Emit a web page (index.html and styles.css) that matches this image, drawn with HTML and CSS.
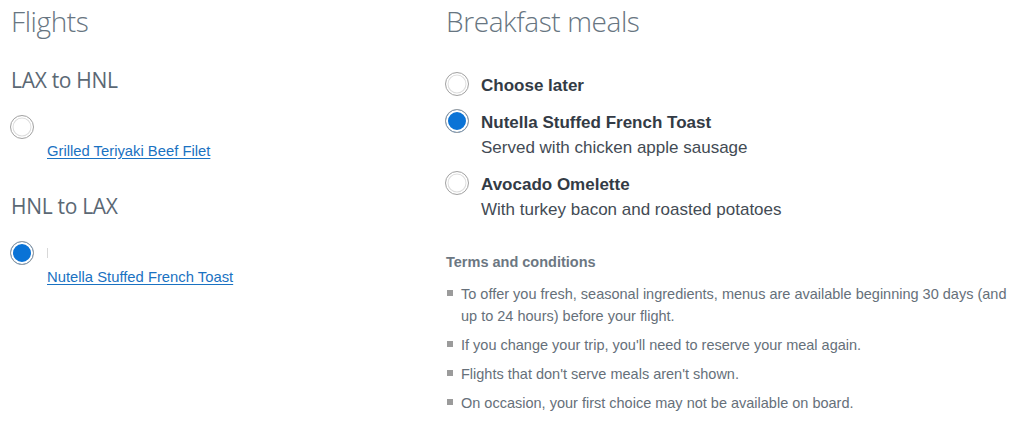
FILE: index.html
```html
<!DOCTYPE html>
<html>
<head>
<meta charset="utf-8">
<link rel="stylesheet" href="styles.css">
</head>
<body>
<div class="page">
  <section class="flights">
    <h1 class="title">Flights</h1>
    <div class="leg">
      <h2 class="leg-title">LAX to HNL</h2>
      <div class="leg-row"><span class="radio"></span></div>
      <a class="leg-link" href="#">Grilled Teriyaki Beef Filet</a>
    </div>
    <div class="leg leg-second">
      <h2 class="leg-title">HNL to LAX</h2>
      <div class="leg-row"><span class="radio checked"></span><span class="caret"></span></div>
      <a class="leg-link" href="#">Nutella Stuffed French Toast</a>
    </div>
  </section>
  <section class="meals">
    <h1 class="title title-meals">Breakfast meals</h1>
    <div class="options">
      <div class="option">
        <span class="radio"></span>
        <div class="option-text"><div class="option-name">Choose later</div></div>
      </div>
      <div class="option">
        <span class="radio checked"></span>
        <div class="option-text">
          <div class="option-name">Nutella Stuffed French Toast</div>
          <div class="option-desc">Served with chicken apple sausage</div>
        </div>
      </div>
      <div class="option">
        <span class="radio"></span>
        <div class="option-text">
          <div class="option-name">Avocado Omelette</div>
          <div class="option-desc">With turkey bacon and roasted potatoes</div>
        </div>
      </div>
    </div>
    <h3 class="terms-title">Terms and conditions</h3>
    <ul class="terms">
      <li>To offer you fresh, seasonal ingredients, menus are available beginning 30 days (and up to 24 hours) before your flight.</li>
      <li>If you change your trip, you'll need to reserve your meal again.</li>
      <li>Flights that don't serve meals aren't shown.</li>
      <li>On occasion, your first choice may not be available on board.</li>
    </ul>
  </section>
</div>
</body>
</html>
```
FILE: styles.css
```css
html, body {
  margin: 0;
  padding: 0;
  background: #ffffff;
}
body {
  font-family: "Liberation Sans", Arial, sans-serif;
  color: #333b44;
}
.page {
  display: flex;
  padding-top: 1px;
}
.flights {
  width: 435px;
  padding-left: 11px;
  flex: none;
}
.meals {
  flex: 1;
  padding-right: 10px;
}
.title {
  margin: 0;
  font-family: "Open Sans", sans-serif;
  font-weight: 300;
  font-size: 28px;
  line-height: 40px;
  color: #677581;
  letter-spacing: -0.4px;
}
.leg-title {
  margin: 24px 0 0;
  font-family: "Open Sans", sans-serif;
  font-weight: 400;
  font-size: 21px;
  line-height: 30px;
  color: #5b6874;
  letter-spacing: -0.3px;
}
.leg-second .leg-title {
  margin-top: 31px;
}
.leg-row {
  display: flex;
  align-items: center;
  margin-top: 20px;
  margin-left: -1px;
  height: 24px;
}
.caret {
  width: 1px;
  height: 10px;
  background: #d8d8d8;
  margin-left: 13px;
}
.leg-link {
  display: inline-block;
  margin-top: 3px;
  margin-left: 36px;
  font-size: 14.8px;
  line-height: 18px;
  color: #1a72c2;
  text-decoration: underline;
  text-underline-offset: 2px;
}
.radio {
  display: inline-block;
  flex: none;
  box-sizing: border-box;
  width: 24px;
  height: 24px;
  border-radius: 50%;
  border: 1.5px solid #a3a3a3;
  background: #ffffff;
  box-shadow: inset 0 0 0 1.5px #ffffff, inset 0 0 0 2.5px #dcdcdc;
}
.radio.checked {
  background: #0a73d6;
  box-shadow: inset 0 0 0 2px #ffffff;
  border-color: #9c9c9c;
}
.options {
  margin-top: 31px;
  margin-left: -1px;
  display: flex;
  flex-direction: column;
  gap: 11px;
}
.option {
  display: flex;
  align-items: flex-start;
}
.option-text {
  margin-left: 12px;
  padding-top: 1px;
}
.option-name {
  font-weight: 700;
  font-size: 17px;
  line-height: 25px;
  color: #333b45;
}
.option-desc {
  font-size: 17px;
  line-height: 25px;
  color: #434b54;
}
.terms-title {
  margin: 31px 0 0;
  font-size: 14.5px;
  line-height: 18px;
  font-weight: 700;
  color: #6c7782;
}
.terms {
  list-style: none;
  margin: 12px 0 0;
  padding: 0;
  display: flex;
  flex-direction: column;
  gap: 7px;
}
.terms li {
  position: relative;
  padding-left: 15px;
  font-size: 14.5px;
  line-height: 22px;
  color: #66707a;
}
.terms li::before {
  content: "";
  position: absolute;
  left: 1px;
  top: 7px;
  width: 6px;
  height: 6px;
  background: #9b9b9b;
}
```
